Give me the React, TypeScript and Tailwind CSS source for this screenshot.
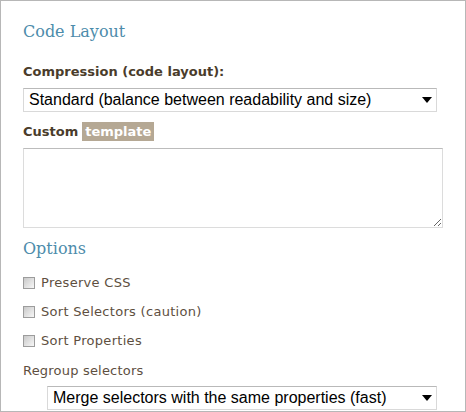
import React from "react";

const Arrow = () => (
  <svg width="10" height="6" viewBox="0 0 10 6" className="block">
    <path d="M0 0 H10 L5 6 Z" fill="#000" />
  </svg>
);

const FakeSelect = ({ text, className }: { text: string; className: string }) => (
  <div
    className={`flex items-center justify-between h-[24px] border border-[#d9d9d9] border-t-[#b9b9b9] bg-white pl-[5px] pr-[4px] ${className}`}
  >
    <span className="text-[16px] leading-[20px] text-black whitespace-nowrap" style={{ fontFamily: '"Liberation Sans", Arial, sans-serif' }}>
      {text}
    </span>
    <Arrow />
  </div>
);

const Check = ({ label }: { label: string }) => (
  <div className="flex items-center h-[12px]">
    <div className="w-[12px] h-[12px] border border-[#9c9c9c] bg-linear-to-br from-[#c9c9c9] to-[#f7f7f7]" />
    <span className="ml-[6px] text-[13px] leading-[16px] tracking-[0.3px] text-[#5e4f3f] whitespace-nowrap">{label}</span>
  </div>
);

export default function App() {
  return (
    <div
      className="w-[466px] h-[412px] border border-[#b7b7b7] bg-white pl-[22px] flex flex-col"
      style={{ fontFamily: '"DejaVu Sans", Verdana, sans-serif' }}
    >
      <h2
        className="mt-[21px] h-[20px] text-[16px] leading-[20px] text-[#4d8cab] whitespace-nowrap"
        style={{ fontFamily: '"DejaVu Serif", Georgia, serif' }}
      >
        Code Layout
      </h2>
      <div className="mt-[22px] h-[16px] text-[13px] leading-[16px] font-bold text-[#4a3c2b] whitespace-nowrap">
        Compression (code layout):
      </div>
      <FakeSelect className="mt-[8px] w-[414px]" text="Standard (balance between readability and size)" />
      <div className="mt-[10px] h-[19px] flex items-center text-[13px] leading-[16px] font-bold text-[#4a3c2b] whitespace-nowrap">
        <span>Custom</span>
        <span className="ml-[4px] h-[19px] px-[3px] flex items-center bg-[#b5a894] text-white">template</span>
      </div>
      <textarea className="mt-[7px] w-[420px] h-[80px] border border-[#dcdcdc] border-t-[#bcbcbc] bg-white outline-none" />
      <h2
        className="mt-[11px] h-[20px] text-[16px] leading-[20px] text-[#4d8cab] whitespace-nowrap"
        style={{ fontFamily: '"DejaVu Serif", Georgia, serif' }}
      >
        Options
      </h2>
      <div className="mt-[18px] flex flex-col gap-[17px]">
        <Check label="Preserve CSS" />
        <Check label="Sort Selectors (caution)" />
        <Check label="Sort Properties" />
      </div>
      <div className="mt-[16px] h-[16px] text-[13px] leading-[16px] tracking-[0.2px] text-[#5e4f3f] whitespace-nowrap">
        Regroup selectors
      </div>
      <FakeSelect className="mt-[7px] ml-[24px] w-[390px]" text="Merge selectors with the same properties (fast)" />
    </div>
  );
}
